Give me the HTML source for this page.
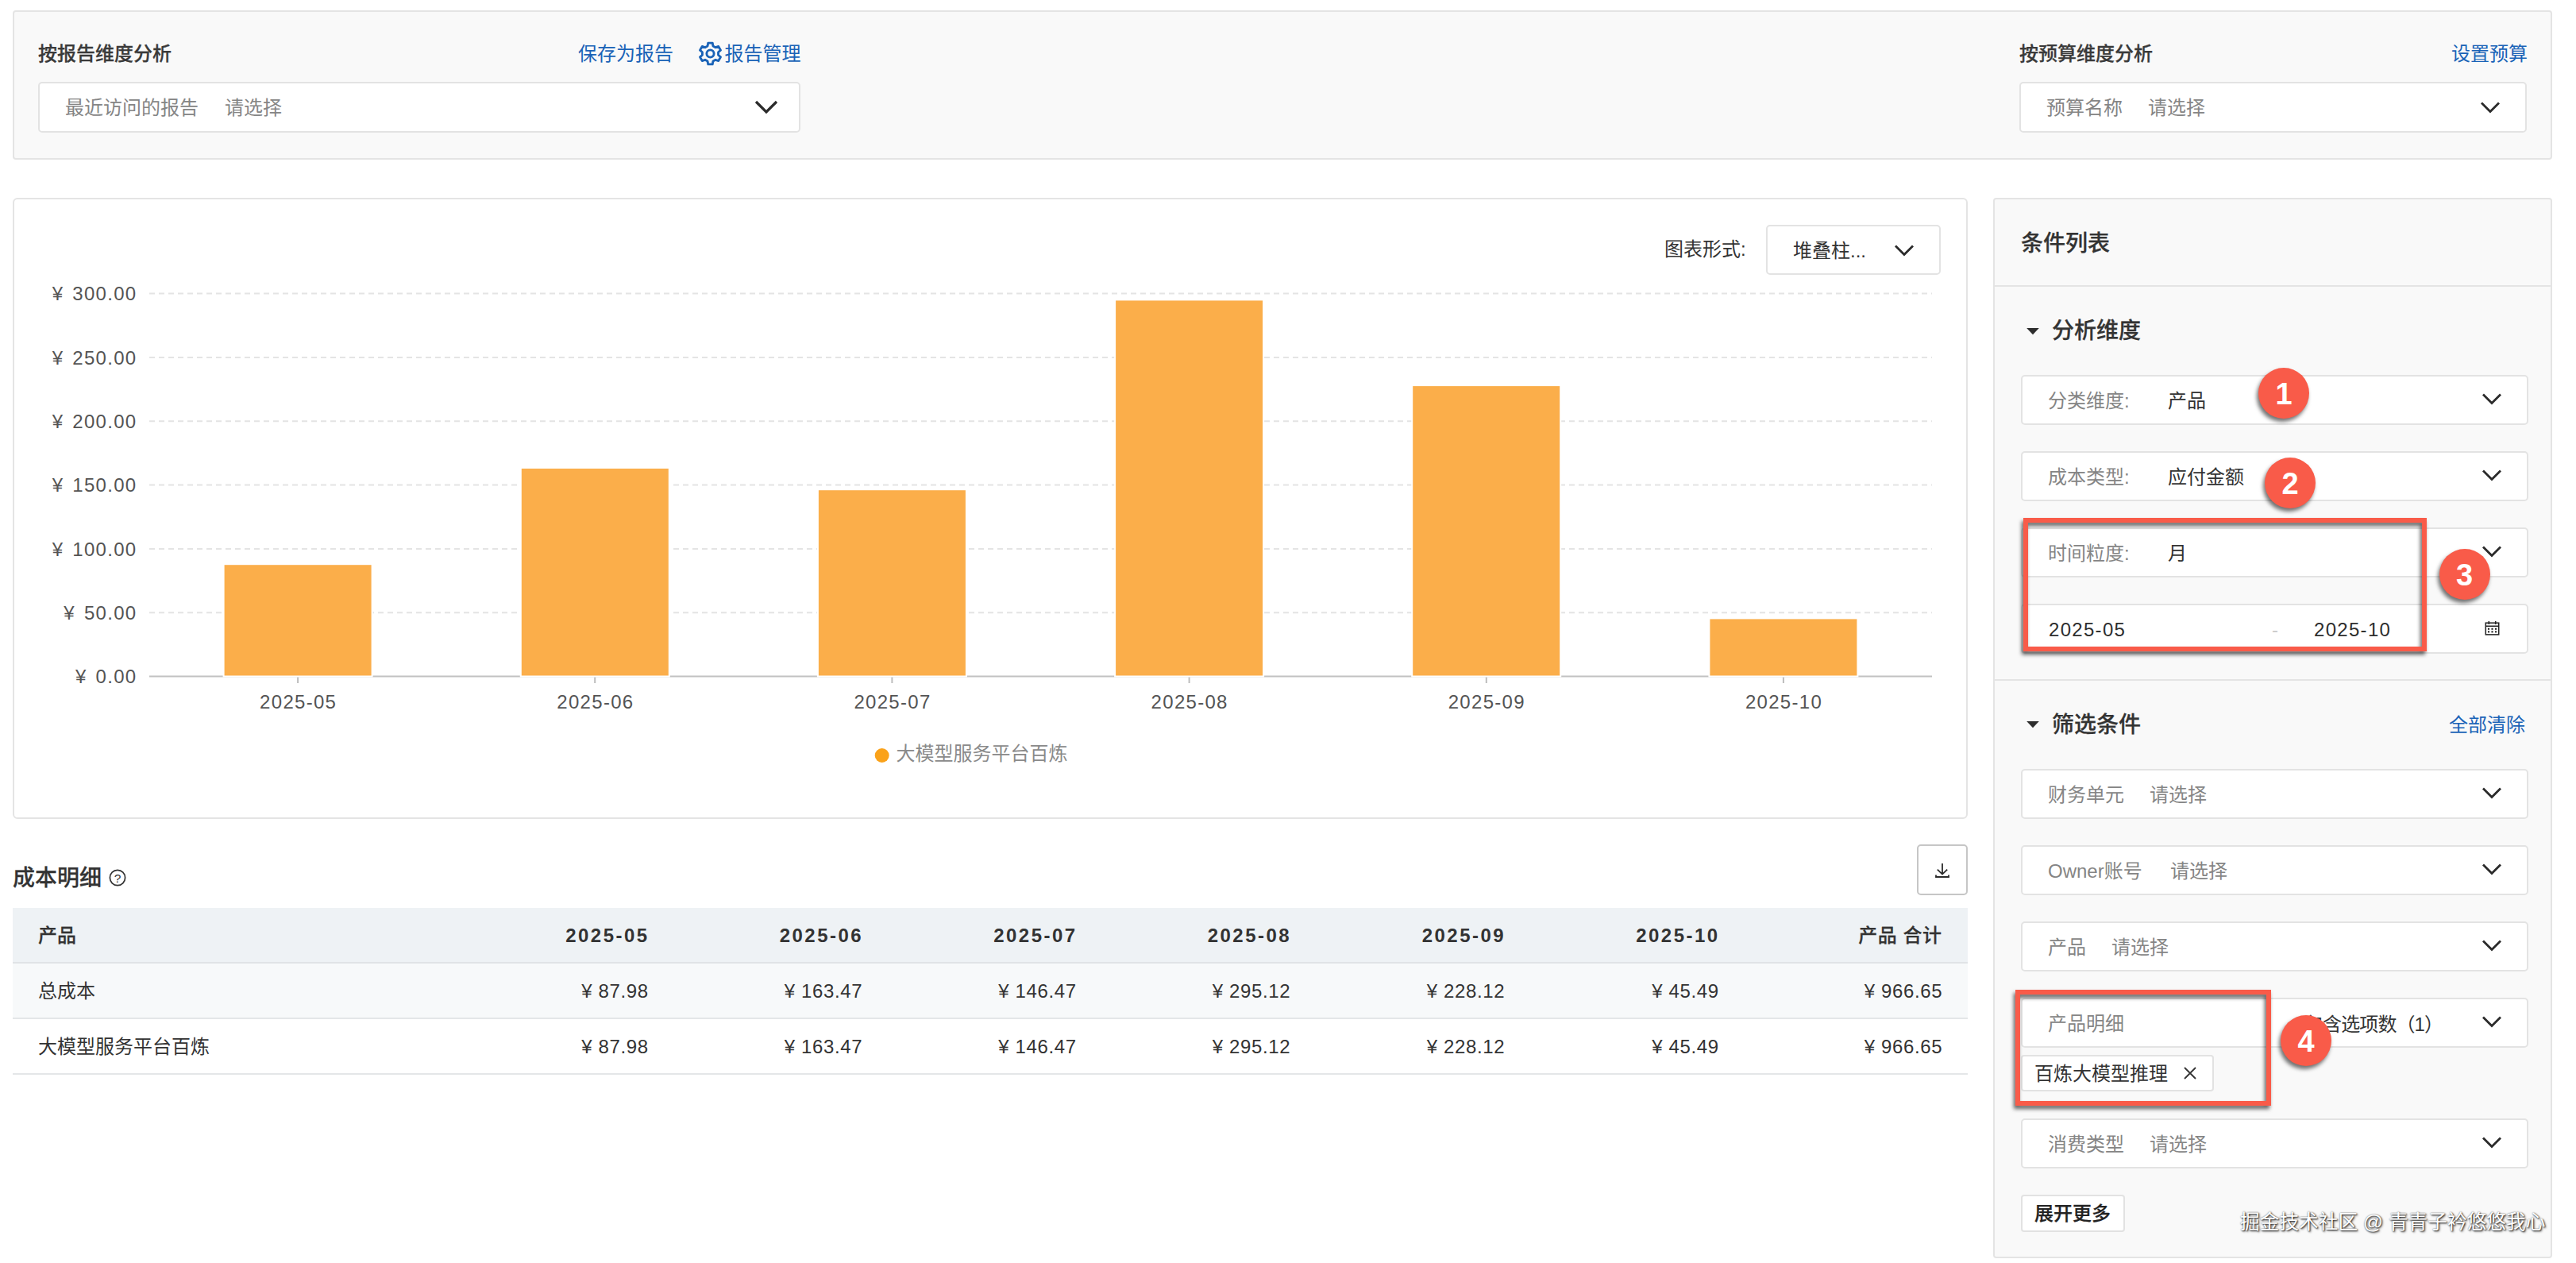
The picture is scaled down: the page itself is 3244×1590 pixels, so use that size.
<!DOCTYPE html>
<html lang="zh-CN">
<head>
<meta charset="utf-8">
<title>成本分析</title>
<style>
*{box-sizing:border-box;margin:0;padding:0}
html,body{width:3244px;height:1590px;overflow:hidden;background:#fff}
body{position:relative;font-family:"Liberation Sans","Noto Sans CJK SC",sans-serif;font-size:24px;color:#333;line-height:32px}
.abs{position:absolute;white-space:nowrap}
.card{position:absolute;border:2px solid #e4e4e4;border-radius:6px}
.gray{background:#f9f9f9}
.t{position:absolute;white-space:nowrap;height:32px;line-height:32px}
.b{font-weight:500;-webkit-text-stroke:0.25px currentColor}
.bn{font-weight:700}
.link{color:#1a63b7}
.lab{color:#858585}
.sel{position:absolute;height:63px;border:2px solid #e3e3e3;border-radius:5px;background:#fff}
.sel .t{top:14.5px}
.chev{position:absolute}
.num{letter-spacing:1.3px}
</style>
</head>
<body>

<!-- ============ TOP CARD ============ -->
<div class="card gray" id="top" style="left:16px;top:13px;width:3198px;height:188px;border-radius:4px"></div>

<div class="t b" style="left:48px;top:52px;color:#3a3a3a">按报告维度分析</div>
<div class="t link" style="left:728px;top:52px">保存为报告</div>
<svg class="abs" style="left:879px;top:52px" width="31" height="31" viewBox="0 0 31 31"><g fill="none" stroke="#1a63b7" stroke-width="2.9" stroke-linejoin="round"><path id="gear" d="M18.99 5.92 L18.23 2.08 L12.77 2.08 L12.01 5.92 L8.94 7.69 L5.24 6.42 L2.51 11.15 L5.45 13.73 L5.45 17.27 L2.51 19.85 L5.24 24.58 L8.94 23.31 L12.01 25.08 L12.77 28.92 L18.23 28.92 L18.99 25.08 L22.06 23.31 L25.76 24.58 L28.49 19.85 L25.55 17.27 L25.55 13.73 L28.49 11.15 L25.76 6.42 L22.06 7.69 Z"/><circle cx="15.5" cy="15.5" r="4.6"/></g></svg>
<div class="t link" style="left:912.5px;top:52px">报告管理</div>

<div class="sel" style="left:48px;top:103px;width:960px;height:64px">
  <div class="t lab" style="left:32px">最近访问的报告</div>
  <div class="t lab" style="left:233px">请选择</div>
  <svg class="chev" style="left:899px;top:20px" width="32" height="20" viewBox="0 0 32 20"><path d="M3 3 L16 16 L29 3" fill="none" stroke="#2b2b2b" stroke-width="3.2"/></svg>
</div>

<div class="t b" style="left:2543px;top:52px;color:#3a3a3a">按预算维度分析</div>
<div class="t link" style="left:3087px;top:52px">设置预算</div>
<div class="sel" style="left:2543px;top:103px;width:639px;height:64px">
  <div class="t lab" style="left:32px">预算名称</div>
  <div class="t lab" style="left:160px">请选择</div>
  <svg class="chev" style="left:578px;top:22px" width="26" height="16" viewBox="0 0 26 16"><path d="M2 2.5 L13 13.5 L24 2.5" fill="none" stroke="#2b2b2b" stroke-width="2.8"/></svg>
</div>

<!-- ============ CHART CARD ============ -->
<div class="card" id="chartcard" style="left:16px;top:249px;width:2462px;height:782px;background:#fff"></div>

<div class="t" style="left:2096px;top:297.5px;color:#333">图表形式:</div>
<div class="sel" style="left:2224px;top:283px;width:220px">
  <div class="t" style="left:32px;top:15px;color:#333">堆叠柱...</div>
  <svg class="chev" style="left:159px;top:21.5px" width="26" height="16" viewBox="0 0 26 16"><path d="M2 2.5 L13 13.5 L24 2.5" fill="none" stroke="#2b2b2b" stroke-width="2.8"/></svg>
</div>

<!--CHART-->
<svg class="abs" style="left:0;top:0" width="2480" height="1040" viewBox="0 0 2480 1040" font-family="'Liberation Sans','Noto Sans CJK SC',sans-serif" font-size="24">
<line x1="188" y1="771.2" x2="2433" y2="771.2" stroke="#e4e4e4" stroke-width="2" stroke-dasharray="7 5"/>
<line x1="188" y1="690.9" x2="2433" y2="690.9" stroke="#e4e4e4" stroke-width="2" stroke-dasharray="7 5"/>
<line x1="188" y1="610.5" x2="2433" y2="610.5" stroke="#e4e4e4" stroke-width="2" stroke-dasharray="7 5"/>
<line x1="188" y1="530.2" x2="2433" y2="530.2" stroke="#e4e4e4" stroke-width="2" stroke-dasharray="7 5"/>
<line x1="188" y1="449.9" x2="2433" y2="449.9" stroke="#e4e4e4" stroke-width="2" stroke-dasharray="7 5"/>
<line x1="188" y1="369.6" x2="2433" y2="369.6" stroke="#e4e4e4" stroke-width="2" stroke-dasharray="7 5"/>
<line x1="188" y1="851.5" x2="2433" y2="851.5" stroke="#c2c2c2" stroke-width="2"/>
<text x="172.5" y="860.1" text-anchor="end" fill="#545454" letter-spacing="1.3" word-spacing="3">¥ 0.00</text>
<text x="172.5" y="779.8" text-anchor="end" fill="#545454" letter-spacing="1.3" word-spacing="3">¥ 50.00</text>
<text x="172.5" y="699.5" text-anchor="end" fill="#545454" letter-spacing="1.3" word-spacing="3">¥ 100.00</text>
<text x="172.5" y="619.1" text-anchor="end" fill="#545454" letter-spacing="1.3" word-spacing="3">¥ 150.00</text>
<text x="172.5" y="538.8" text-anchor="end" fill="#545454" letter-spacing="1.3" word-spacing="3">¥ 200.00</text>
<text x="172.5" y="458.5" text-anchor="end" fill="#545454" letter-spacing="1.3" word-spacing="3">¥ 250.00</text>
<text x="172.5" y="378.2" text-anchor="end" fill="#545454" letter-spacing="1.3" word-spacing="3">¥ 300.00</text>
<line x1="375.1" y1="851.5" x2="375.1" y2="860.0" stroke="#bdbdbd" stroke-width="2"/>
<rect x="281.6" y="710.2" width="187" height="141.3" fill="#fbae4a" stroke="#fff" stroke-width="2"/>
<text x="375.7" y="892.3" text-anchor="middle" fill="#545454" letter-spacing="1.3">2025-05</text>
<line x1="749.2" y1="851.5" x2="749.2" y2="860.0" stroke="#bdbdbd" stroke-width="2"/>
<rect x="655.8" y="588.9" width="187" height="262.6" fill="#fbae4a" stroke="#fff" stroke-width="2"/>
<text x="749.9" y="892.3" text-anchor="middle" fill="#545454" letter-spacing="1.3">2025-06</text>
<line x1="1123.4" y1="851.5" x2="1123.4" y2="860.0" stroke="#bdbdbd" stroke-width="2"/>
<rect x="1029.9" y="616.2" width="187" height="235.3" fill="#fbae4a" stroke="#fff" stroke-width="2"/>
<text x="1124.0" y="892.3" text-anchor="middle" fill="#545454" letter-spacing="1.3">2025-07</text>
<line x1="1497.6" y1="851.5" x2="1497.6" y2="860.0" stroke="#bdbdbd" stroke-width="2"/>
<rect x="1404.1" y="377.4" width="187" height="474.1" fill="#fbae4a" stroke="#fff" stroke-width="2"/>
<text x="1498.2" y="892.3" text-anchor="middle" fill="#545454" letter-spacing="1.3">2025-08</text>
<line x1="1871.8" y1="851.5" x2="1871.8" y2="860.0" stroke="#bdbdbd" stroke-width="2"/>
<rect x="1778.2" y="485.1" width="187" height="366.4" fill="#fbae4a" stroke="#fff" stroke-width="2"/>
<text x="1872.3" y="892.3" text-anchor="middle" fill="#545454" letter-spacing="1.3">2025-09</text>
<line x1="2245.9" y1="851.5" x2="2245.9" y2="860.0" stroke="#bdbdbd" stroke-width="2"/>
<rect x="2152.4" y="778.4" width="187" height="73.1" fill="#fbae4a" stroke="#fff" stroke-width="2"/>
<text x="2246.5" y="892.3" text-anchor="middle" fill="#545454" letter-spacing="1.3">2025-10</text>
<circle cx="1110.7" cy="951" r="9" fill="#faa21a"/>
<text x="1128.5" y="956.8" fill="#8a8a8a">大模型服务平台百炼</text>
</svg>
<!--/CHART-->

<!-- ============ TABLE ============ -->
<!--TABLE-->
<div class="t b" style="left:16px;top:1089.5px;font-size:28px;color:#333">成本明细</div>
<svg class="abs" style="left:136px;top:1093px" width="24" height="24" viewBox="0 0 24 24"><circle cx="12" cy="12" r="9.6" fill="none" stroke="#333" stroke-width="1.7"/><text x="12" y="17.6" text-anchor="middle" font-family="'Liberation Sans',sans-serif" font-size="15.5" font-weight="400" fill="#333">?</text></svg>
<div class="abs" style="left:2414px;top:1063px;width:64px;height:64px;border:2px solid #c6c6c6;border-radius:5px;background:#fff"></div>
<svg class="abs" style="left:2434px;top:1084px" width="24" height="24" viewBox="0 0 24 24"><g fill="none" stroke="#2b2b2b" stroke-width="1.8"><path d="M12 3 V16.5 M5.8 10.6 L12 16.6 L18.2 10.6 M4 17.6 V20 H20 V17.6"/></g></svg>
<div class="abs" style="left:16px;top:1143px;width:2462px;height:70px;background:#eef2f5;border-bottom:2px solid #e0e3e6"></div>
<div class="abs" style="left:16px;top:1213px;width:2462px;height:70px;background:#f7f9fa;border-bottom:2px solid #e4e6e8"></div>
<div class="abs" style="left:16px;top:1283px;width:2462px;height:70px;background:#fff;border-bottom:2px solid #e4e6e8"></div>
<div class="t b" style="left:48px;top:1162px;color:#333">产品</div>
<div class="t" style="left:48px;top:1232px;color:#333">总成本</div>
<div class="t" style="left:48px;top:1302px;color:#333">大模型服务平台百炼</div>
<div class="t bn" style="right:2428px;top:1162px;color:#333;letter-spacing:2.45px;margin-right:-1.5px;">2025-05</div>
<div class="t" style="right:2428px;top:1232px;color:#333;letter-spacing:0.6px;margin-right:-0.6px">¥ 87.98</div>
<div class="t" style="right:2428px;top:1302px;color:#333;letter-spacing:0.6px;margin-right:-0.6px">¥ 87.98</div>
<div class="t bn" style="right:2158.5px;top:1162px;color:#333;letter-spacing:2.45px;margin-right:-1.5px;">2025-06</div>
<div class="t" style="right:2158.5px;top:1232px;color:#333;letter-spacing:0.6px;margin-right:-0.6px">¥ 163.47</div>
<div class="t" style="right:2158.5px;top:1302px;color:#333;letter-spacing:0.6px;margin-right:-0.6px">¥ 163.47</div>
<div class="t bn" style="right:1889px;top:1162px;color:#333;letter-spacing:2.45px;margin-right:-1.5px;">2025-07</div>
<div class="t" style="right:1889px;top:1232px;color:#333;letter-spacing:0.6px;margin-right:-0.6px">¥ 146.47</div>
<div class="t" style="right:1889px;top:1302px;color:#333;letter-spacing:0.6px;margin-right:-0.6px">¥ 146.47</div>
<div class="t bn" style="right:1619.5px;top:1162px;color:#333;letter-spacing:2.45px;margin-right:-1.5px;">2025-08</div>
<div class="t" style="right:1619.5px;top:1232px;color:#333;letter-spacing:0.6px;margin-right:-0.6px">¥ 295.12</div>
<div class="t" style="right:1619.5px;top:1302px;color:#333;letter-spacing:0.6px;margin-right:-0.6px">¥ 295.12</div>
<div class="t bn" style="right:1349.5px;top:1162px;color:#333;letter-spacing:2.45px;margin-right:-1.5px;">2025-09</div>
<div class="t" style="right:1349.5px;top:1232px;color:#333;letter-spacing:0.6px;margin-right:-0.6px">¥ 228.12</div>
<div class="t" style="right:1349.5px;top:1302px;color:#333;letter-spacing:0.6px;margin-right:-0.6px">¥ 228.12</div>
<div class="t bn" style="right:1080px;top:1162px;color:#333;letter-spacing:2.45px;margin-right:-1.5px;">2025-10</div>
<div class="t" style="right:1080px;top:1232px;color:#333;letter-spacing:0.6px;margin-right:-0.6px">¥ 45.49</div>
<div class="t" style="right:1080px;top:1302px;color:#333;letter-spacing:0.6px;margin-right:-0.6px">¥ 45.49</div>
<div class="t b" style="right:798.5px;top:1162px;color:#333;letter-spacing:0.5px;">产品 合计</div>
<div class="t" style="right:798.5px;top:1232px;color:#333;letter-spacing:0.6px;margin-right:-0.6px">¥ 966.65</div>
<div class="t" style="right:798.5px;top:1302px;color:#333;letter-spacing:0.6px;margin-right:-0.6px">¥ 966.65</div>
<!--/TABLE-->

<!-- ============ RIGHT PANEL ============ -->
<!--PANEL-->
<div class="card gray" style="left:2510px;top:249px;width:704px;height:1335px;border-radius:4px"></div>
<div class="abs" style="left:2512px;top:359px;width:700px;height:2px;background:#e4e4e4"></div>
<div class="abs" style="left:2512px;top:855px;width:700px;height:2px;background:#e4e4e4"></div>
<div class="t b" style="left:2545px;top:291px;font-size:28px;color:#333">条件列表</div>
<svg class="abs" style="left:2551px;top:412px" width="18" height="10" viewBox="0 0 18 10"><path d="M1.2 1 H16.8 L9 9.2 Z" fill="#2e2e2e"/></svg>
<div class="t b" style="left:2584px;top:401px;font-size:28px;color:#333">分析维度</div>
<svg class="abs" style="left:2551px;top:907px" width="18" height="10" viewBox="0 0 18 10"><path d="M1.2 1 H16.8 L9 9.2 Z" fill="#2e2e2e"/></svg>
<div class="t b" style="left:2584px;top:897px;font-size:28px;color:#333">筛选条件</div>
<div class="t link" style="left:3084px;top:897px">全部清除</div>
<div class="sel" style="left:2545px;top:472px;width:639px"><div class="t lab" style="left:32px">分类维度:</div><div class="t" style="left:183px;color:#333">产品</div><svg class="chev" style="left:578px;top:20px" width="26" height="16" viewBox="0 0 26 16"><path d="M2 2.5 L13 13.5 L24 2.5" fill="none" stroke="#2b2b2b" stroke-width="2.8"/></svg></div>
<div class="sel" style="left:2545px;top:568px;width:639px"><div class="t lab" style="left:32px">成本类型:</div><div class="t" style="left:183px;color:#333">应付金额</div><svg class="chev" style="left:578px;top:20px" width="26" height="16" viewBox="0 0 26 16"><path d="M2 2.5 L13 13.5 L24 2.5" fill="none" stroke="#2b2b2b" stroke-width="2.8"/></svg></div>
<div class="sel" style="left:2545px;top:664px;width:639px"><div class="t lab" style="left:32px">时间粒度:</div><div class="t" style="left:183px;color:#333">月</div><svg class="chev" style="left:578px;top:20px" width="26" height="16" viewBox="0 0 26 16"><path d="M2 2.5 L13 13.5 L24 2.5" fill="none" stroke="#2b2b2b" stroke-width="2.8"/></svg></div>
<div class="sel" style="left:2545px;top:760px;width:639px"><div class="t num" style="left:33px;color:#2e2e2e">2025-05</div><div class="t" style="left:314px;color:#ccc">-</div><div class="t num" style="left:367px;color:#2e2e2e">2025-10</div><svg class="abs" style="left:580.5px;top:18px" width="21" height="21" viewBox="0 0 22 22"><g fill="none" stroke="#222" stroke-width="1.6"><rect x="2.4" y="4.4" width="17.2" height="15.4"/><path d="M2.4 8.6 H19.6 M6.6 2.2 V6.4 M15.4 2.2 V6.4"/></g><g fill="#222"><rect x="5.2" y="11.2" width="2.2" height="2.2"/><rect x="9.9" y="11.2" width="2.2" height="2.2"/><rect x="14.6" y="11.2" width="2.2" height="2.2"/><rect x="5.2" y="15" width="2.2" height="2.2"/><rect x="9.9" y="15" width="2.2" height="2.2"/><rect x="14.6" y="15" width="2.2" height="2.2"/></g></svg></div>
<div class="sel" style="left:2545px;top:968px;width:639px"><div class="t lab" style="left:32px">财务单元</div><div class="t lab" style="left:160px">请选择</div><svg class="chev" style="left:578px;top:20px" width="26" height="16" viewBox="0 0 26 16"><path d="M2 2.5 L13 13.5 L24 2.5" fill="none" stroke="#2b2b2b" stroke-width="2.8"/></svg></div>
<div class="sel" style="left:2545px;top:1064px;width:639px"><div class="t lab" style="left:32px">Owner账号</div><div class="t lab" style="left:186px">请选择</div><svg class="chev" style="left:578px;top:20px" width="26" height="16" viewBox="0 0 26 16"><path d="M2 2.5 L13 13.5 L24 2.5" fill="none" stroke="#2b2b2b" stroke-width="2.8"/></svg></div>
<div class="sel" style="left:2545px;top:1160px;width:639px"><div class="t lab" style="left:32px">产品</div><div class="t lab" style="left:112px">请选择</div><svg class="chev" style="left:578px;top:20px" width="26" height="16" viewBox="0 0 26 16"><path d="M2 2.5 L13 13.5 L24 2.5" fill="none" stroke="#2b2b2b" stroke-width="2.8"/></svg></div>
<div class="sel" style="left:2545px;top:1256px;width:639px"><div class="t lab" style="left:32px">产品明细</div><div class="t" style="left:355px;top:16px;color:#333;letter-spacing:-0.9px">包含选项数（1）</div><svg class="chev" style="left:578px;top:20px" width="26" height="16" viewBox="0 0 26 16"><path d="M2 2.5 L13 13.5 L24 2.5" fill="none" stroke="#2b2b2b" stroke-width="2.8"/></svg></div>
<div class="abs" style="left:2545px;top:1328px;width:243px;height:46px;border:2px solid #e2e2e2;border-radius:4px;background:#fff"></div>
<div class="t" style="left:2562px;top:1336px;color:#333">百炼大模型推理</div>
<svg class="abs" style="left:2748px;top:1341px" width="20" height="20" viewBox="0 0 20 20"><path d="M3 3 L17 17 M17 3 L3 17" stroke="#333" stroke-width="1.8" fill="none"/></svg>
<div class="sel" style="left:2545px;top:1408px;width:639px"><div class="t lab" style="left:32px">消费类型</div><div class="t lab" style="left:160px">请选择</div><svg class="chev" style="left:578px;top:20px" width="26" height="16" viewBox="0 0 26 16"><path d="M2 2.5 L13 13.5 L24 2.5" fill="none" stroke="#2b2b2b" stroke-width="2.8"/></svg></div>
<div class="abs" style="left:2545px;top:1504px;width:131px;height:47px;border:2px solid #e2e2e2;border-radius:4px;background:#fff"></div>
<div class="t b" style="left:2562px;top:1512px;color:#222">展开更多</div>
<div class="t" id="wm" style="left:2821px;top:1522.5px;color:#fff;font-size:24.7px;text-shadow:1px 1px 2px rgba(0,0,0,.8),0 0 2px rgba(0,0,0,.55),2px 2px 3px rgba(0,0,0,.25)">掘金技术社区 @ 青青子衿悠悠我心</div>
<!--/PANEL-->

<!-- ============ ANNOTATIONS ============ -->
<!--ANNO-->
<div class="abs" style="left:2548px;top:652px;width:508px;height:168px;border:6px solid #f95b49;filter:drop-shadow(-2px 4.5px 2.5px rgba(0,0,0,.62))"></div>
<div class="abs" style="left:2538px;top:1246px;width:322px;height:146px;border:6px solid #f95b49;filter:drop-shadow(-2px 4.5px 2.5px rgba(0,0,0,.62))"></div>
<div class="abs" style="left:2844px;top:462.5px;width:64px;height:64px;border-radius:50%;background:#f95b49;box-shadow:-2px 4px 5px rgba(0,0,0,.55);color:#fff;font-weight:700;font-size:38px;line-height:66px;text-align:center">1</div>
<div class="abs" style="left:2852px;top:576px;width:64px;height:64px;border-radius:50%;background:#f95b49;box-shadow:-2px 4px 5px rgba(0,0,0,.55);color:#fff;font-weight:700;font-size:38px;line-height:66px;text-align:center">2</div>
<div class="abs" style="left:3071.5px;top:690.5px;width:64px;height:64px;border-radius:50%;background:#f95b49;box-shadow:-2px 4px 5px rgba(0,0,0,.55);color:#fff;font-weight:700;font-size:38px;line-height:66px;text-align:center">3</div>
<div class="abs" style="left:2872px;top:1278px;width:64px;height:64px;border-radius:50%;background:#f95b49;box-shadow:-2px 4px 5px rgba(0,0,0,.55);color:#fff;font-weight:700;font-size:38px;line-height:66px;text-align:center">4</div>
<!--/ANNO-->

</body>
</html>
